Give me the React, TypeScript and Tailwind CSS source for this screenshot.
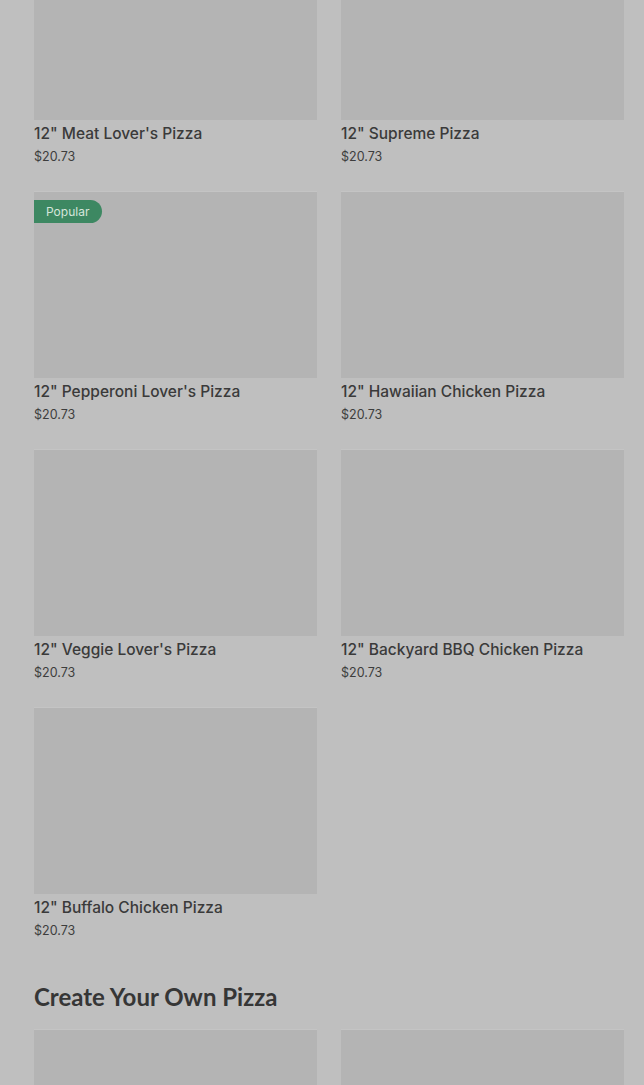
const pizzas = [
  { name: '12" Meat Lover\'s Pizza', price: "$20.73" },
  { name: '12" Supreme Pizza', price: "$20.73" },
  { name: '12" Pepperoni Lover\'s Pizza', price: "$20.73", popular: true },
  { name: '12" Hawaiian Chicken Pizza', price: "$20.73" },
  { name: '12" Veggie Lover\'s Pizza', price: "$20.73" },
  { name: '12" Backyard BBQ Chicken Pizza', price: "$20.73" },
  { name: '12" Buffalo Chicken Pizza', price: "$20.73" },
];

function PizzaCard({ name, price, popular }: { name: string; price: string; popular?: boolean }) {
  return (
    <div className="flex flex-col">
      <div className="relative h-[187px] bg-[#b4b4b4] border-t border-[#c4c4c4]">
        {popular && (
          <span className="absolute left-0 top-[8px] h-[23px] w-[68px] rounded-r-full bg-[#3d8862] pl-[12px] text-[12px] leading-[23px] text-[#d5e5db]">
            Popular
          </span>
        )}
      </div>
      <h3 className="mt-[4px] text-[15.5px] leading-[20px] font-medium text-[#3a3a3a]">{name}</h3>
      <p className="mt-[4px] text-[12.5px] leading-[18px] text-[#3d3d3d]">{price}</p>
    </div>
  );
}

export default function App() {
  return (
    <div className="h-[1085px] overflow-hidden bg-[#bfbfbf] pl-[34px] pr-[20px] font-['Inter',sans-serif]">
      <div className="-mt-[67px] grid grid-cols-2 gap-x-[24px] gap-y-[25px]">
        {pizzas.map((p) => (
          <PizzaCard key={p.name} {...p} />
        ))}
      </div>
      <h2 className="mt-[43px] font-['Lato',sans-serif] text-[24px] leading-[28px] font-bold text-[#363636]">
        Create Your Own Pizza
      </h2>
      <div className="mt-[18px] grid grid-cols-2 gap-x-[24px]">
        <div className="h-[187px] bg-[#b4b4b4] border-t border-[#c4c4c4]" />
        <div className="h-[187px] bg-[#b4b4b4] border-t border-[#c4c4c4]" />
      </div>
    </div>
  );
}
